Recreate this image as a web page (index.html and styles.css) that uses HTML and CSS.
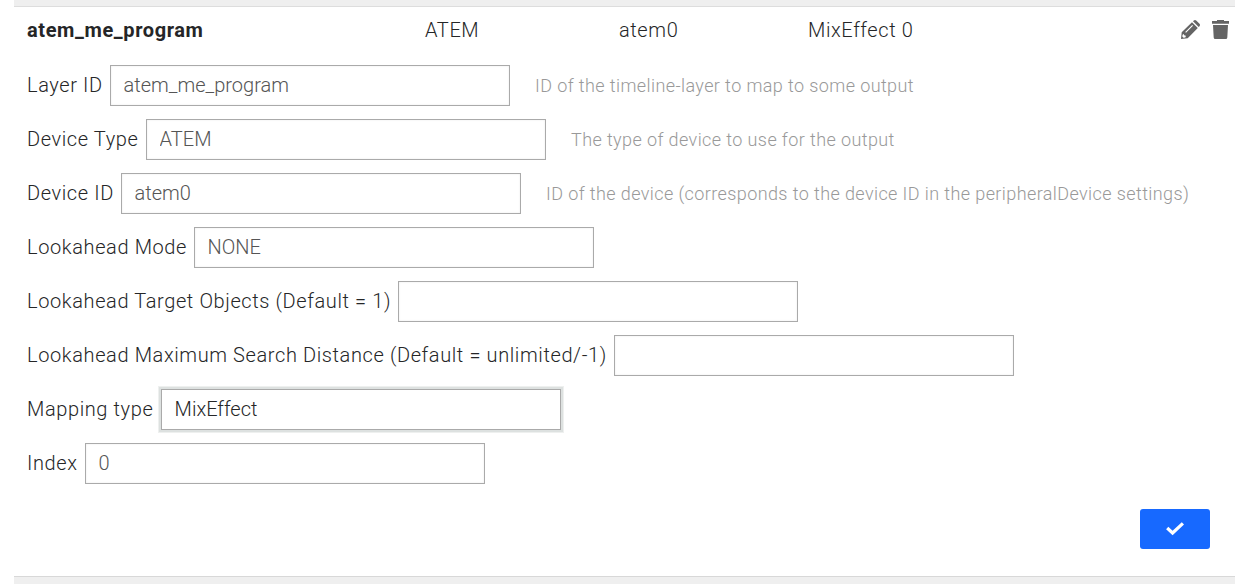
FILE: index.html
```html
<!DOCTYPE html>
<html lang="en">
<head>
<meta charset="utf-8">
<title>Layer Mappings</title>
<link rel="stylesheet" href="styles.css">
</head>
<body>
<main class="mapping">
  <header class="summary">
    <strong class="name">atem_me_program</strong>
    <span class="device">ATEM</span>
    <span class="device-id">atem0</span>
    <span class="type">MixEffect 0</span>
    <span class="actions">
      <svg class="pencil" viewBox="0 0 19 19"><path fill-rule="evenodd" d="M0 19 .7 12.3 11 2.2l5.8 5.8L6.7 18.3zM1.6 14.7l-.3 1.8 1.2 1.2 1.8-.3.5-1-.3-1-1.4-.2-.2-1.2zM4.2 12l.8.8 7-7-.8-.8zM12 1.2 12.8.5q1.2-1 2.4 0l3.3 3.3q1 1.2 0 2.4l-.8.8z"/></svg>
      <svg class="trash" viewBox="0 0 17 19"><path d="M0 1h5V0h7v1h5v2.8H0zM1 5h15l-.7 12.5Q15.2 19 13.8 19H3.2Q1.8 19 1.7 17.5z"/></svg>
    </span>
  </header>
  <form class="fields">
    <div class="field"><label class="layer">Layer ID</label><input class="input" value="atem_me_program"><span class="hint">ID of the timeline-layer to map to some output</span></div>
    <div class="field"><label class="dtype">Device Type</label><input class="input" value="ATEM"><span class="hint">The type of device to use for the output</span></div>
    <div class="field"><label class="did">Device ID</label><input class="input" value="atem0"><span class="hint">ID of the device (corresponds to the device ID in the peripheralDevice settings)</span></div>
    <div class="field"><label class="mode">Lookahead Mode</label><input class="input" value="NONE"></div>
    <div class="field"><label class="objects">Lookahead Target Objects (Default = 1)</label><input class="input"></div>
    <div class="field"><label class="distance">Lookahead Maximum Search Distance (Default = unlimited/-1)</label><input class="input"></div>
    <div class="field"><label class="mtype">Mapping type</label><input class="input active" value="MixEffect"></div>
    <div class="field"><label class="index">Index</label><input class="input" value="0"></div>
  </form>
  <button class="confirm" aria-label="Confirm"><svg class="check" viewBox="0 0 18 13"><path d="M1.2 6 6.6 11 16.9 1.3"/></svg></button>
</main>
</body>
</html>
```
FILE: styles.css
```css
*, *::before, *::after { box-sizing: border-box; }
body { margin: 0; background: #fff; color: #252627; font: 300 20px/24px Roboto, sans-serif; letter-spacing: .6px; }
.mapping { height: 584px; margin: 0 10px 0 14px; display: flex; flex-direction: column; }
.mapping::before { content: ""; height: 7px; background: #efefef; border-bottom: 1px solid #ddd; }
.mapping::after { content: ""; height: 8px; margin-top: auto; background: #efefef; border-top: 1px solid #d8d8d8; }
.summary { height: 58px; padding: 11px 6px 0 13px; display: grid; grid-template-columns: 398px 194px 189px 1fr auto; }
.name { font-weight: 700; }
.actions { display: flex; gap: 12px; fill: #646464; }
.pencil { width: 19px; height: 19px; margin-top: 2px; }
.trash { width: 17px; height: 19px; margin-top: 2px; }
.fields { padding-left: 13px; display: flex; flex-direction: column; gap: 13px; }
.field { height: 41px; display: flex; align-items: center; white-space: nowrap; }
.field label { padding-bottom: 2px; letter-spacing: .61px; }
.layer { width: 83px; }
.dtype { width: 119px; }
.did { width: 94px; }
.mode { width: 167px; }
.objects { width: 371px; }
.distance { width: 587px; }
.mtype { width: 134px; }
.index { width: 58px; }
.input { width: 400px; height: 41px; padding: 0 13px 2px 12.6px; border: 1px solid #aaa; border-radius: 0; font: 300 20px/24px Roboto, sans-serif; color: #555; outline: 0; box-shadow: inset 0 0 2px rgba(0, 0, 0, .1); }
.active { color: #252627; box-shadow: 0 0 0 2px #dde1e0, 0 0 0 3px #eef0ef; }
.hint { margin-left: 25px; color: #999; font-size: 18px; letter-spacing: .4px; }
.confirm { align-self: flex-end; margin: 25px 25px 0 0; width: 70px; height: 40px; border: 0; border-radius: 3px; background: #1769ff; padding: 0 0 1px; display: grid; place-items: center; }
.check { width: 18px; height: 13px; overflow: visible; fill: none; stroke: #fff; stroke-width: 3.2; }
```
